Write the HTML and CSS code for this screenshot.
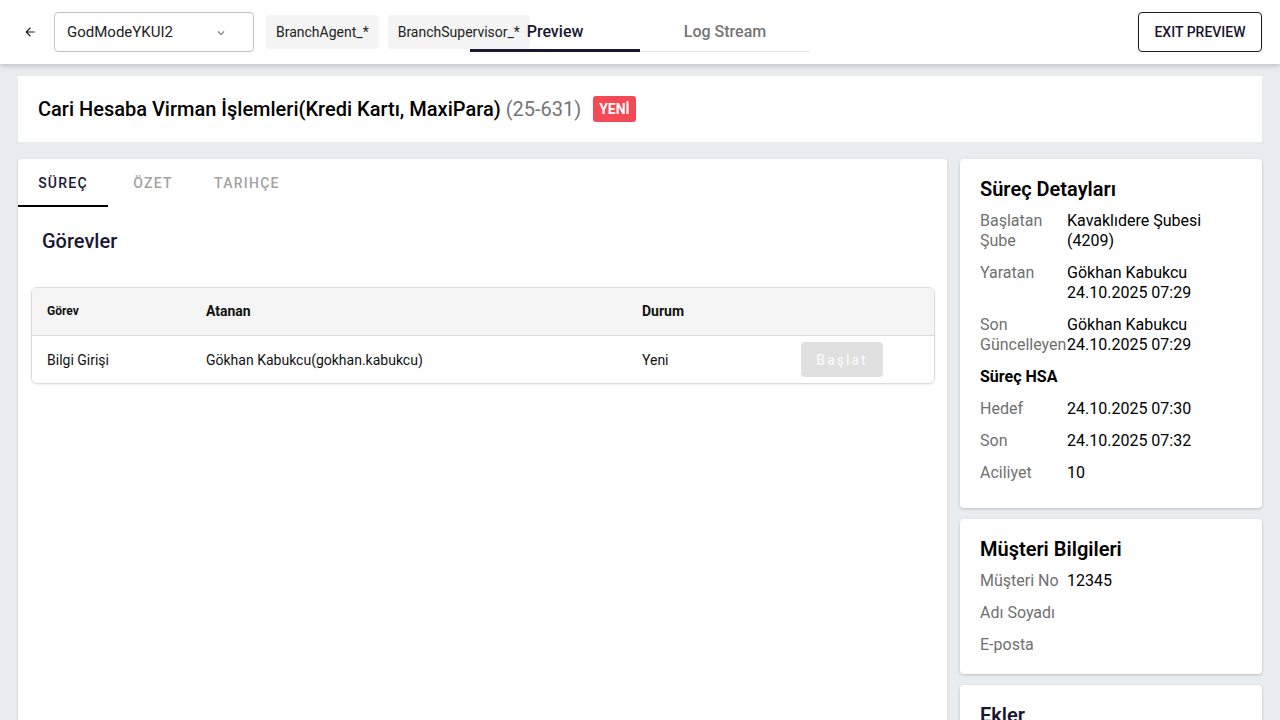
FILE: index.html
```html
<!DOCTYPE html>
<html lang="tr">
<head>
<meta charset="utf-8">
<title>Preview</title>
<link rel="stylesheet" href="styles.css">
</head>
<body>
<header class="topbar">
  <button class="back" aria-label="Geri">
    <svg width="14" height="14" viewBox="0 0 24 24"><path d="M20 11H7.83l5.59-5.59L12 4l-8 8 8 8 1.41-1.41L7.83 13H20v-2z" fill="#222"/></svg>
  </button>
  <div class="select">
    <span>GodModeYKUI2</span>
    <svg width="14" height="14" viewBox="0 0 24 24"><path d="M7.41 8.59 12 13.17l4.59-4.58L18 10l-6 6-6-6z" fill="#777"/></svg>
  </div>
  <span class="chip">BranchAgent_*</span>
  <span class="chip">BranchSupervisor_*</span>
  <nav class="toptabs">
    <span class="toptab active">Preview</span>
    <span class="toptab">Log Stream</span>
  </nav>
  <button class="exit">EXIT PREVIEW</button>
</header>

<main class="page">
  <section class="titlecard">
    <h1 class="title">Cari Hesaba Virman İşlemleri(Kredi Kartı, MaxiPara) <span class="code">(25-631)</span></h1>
    <span class="badge">YENİ</span>
  </section>

  <div class="columns">
    <section class="maincard">
      <div class="tabs">
        <span class="tab active">SÜREÇ</span>
        <span class="tab">ÖZET</span>
        <span class="tab">TARIHÇE</span>
      </div>
      <h2 class="section-title">Görevler</h2>
      <div class="table">
        <div class="trow thead">
          <span class="th small">Görev</span>
          <span class="th">Atanan</span>
          <span class="th">Durum</span>
          <span></span>
        </div>
        <div class="trow">
          <span>Bilgi Girişi</span>
          <span>Gökhan Kabukcu(gokhan.kabukcu)</span>
          <span>Yeni</span>
          <span><button class="start" disabled>Başlat</button></span>
        </div>
      </div>
    </section>

    <aside class="side">
      <section class="card card-first">
        <h3 class="card-title">Süreç Detayları</h3>
        <dl class="rows">
          <dt>Başlatan Şube</dt><dd>Kavaklıdere Şubesi (4209)</dd>
          <dt>Yaratan</dt><dd>Gökhan Kabukcu 24.10.2025 07:29</dd>
          <dt>Son Güncelleyen</dt><dd>Gökhan Kabukcu 24.10.2025 07:29</dd>
          <dt class="sub">Süreç HSA</dt><dd class="empty"></dd>
          <dt>Hedef</dt><dd>24.10.2025 07:30</dd>
          <dt>Son</dt><dd>24.10.2025 07:32</dd>
          <dt>Aciliyet</dt><dd>10</dd>
        </dl>
      </section>
      <section class="card card-tight">
        <h3 class="card-title">Müşteri Bilgileri</h3>
        <dl class="rows">
          <dt>Müşteri No</dt><dd>12345</dd>
          <dt>Adı Soyadı</dt><dd></dd>
          <dt>E-posta</dt><dd></dd>
        </dl>
      </section>
      <section class="card">
        <h3 class="card-title navy">Ekler</h3>
        <div class="spacer"></div>
      </section>
    </aside>
  </div>
</main>
</body>
</html>
```

FILE: styles.css
```css
* { box-sizing: border-box; }
html, body { margin: 0; padding: 0; }
body {
  font-family: Roboto, "Noto Sans", "Liberation Sans", sans-serif;
  background: #e9ecef;
  color: #000;
  width: 1280px;
  height: 720px;
  overflow: hidden;
}

/* top bar */
.topbar {
  position: relative;
  height: 64px;
  background: #fff;
  display: flex;
  align-items: center;
  padding: 0 18px 0 20px;
  box-shadow: 0 2px 5px rgba(0,0,0,0.18);
  z-index: 2;
}
.back {
  width: 20px; height: 24px;
  padding: 0;
  border: none; background: none;
  display: flex; align-items: center; justify-content: center;
  margin-right: 14px;
}
.select {
  width: 200px; height: 40px;
  border: 1px solid #c4c4c4;
  border-radius: 4px;
  display: flex; align-items: center; justify-content: space-between;
  padding: 0 25px 0 12px;
  font-size: 15px;
  color: #222;
}
.select svg { margin-top: 1px; }
.chip {
  height: 34px;
  display: flex; align-items: center;
  padding: 0 10px;
  background: #f4f4f4;
  border-radius: 4px;
  font-size: 14px;
  color: #222;
  margin-left: 12px;
}
.chip + .chip { margin-left: 9px; }
.toptabs {
  position: absolute;
  left: 470px; top: 0;
  width: 340px; height: 52px;
  display: flex;
  border-bottom: 1px solid #e0e0e0;
}
.toptab {
  flex: 1;
  display: flex; align-items: center; justify-content: center;
  padding-top: 12px;
  font-size: 16px;
  font-weight: 500;
  color: #757575;
}
.toptab.active {
  color: #1a1633;
  border-bottom: 3px solid #1a1633;
  margin-bottom: -1px;
  padding-top: 13px;
}
.exit {
  margin-left: auto;
  width: 124px; height: 40px;
  border: 1px solid #1a1633;
  border-radius: 4px;
  background: #fff;
  color: #1a1633;
  font-family: inherit;
  font-size: 14px;
  font-weight: 500;
}

/* page */
.page { padding: 12px 18px 0; }
.titlecard {
  height: 66px;
  background: #fff;
  display: flex; align-items: center;
  padding: 0 20px;
}
.title {
  margin: 0;
  font-size: 20px;
  font-weight: 500;
  color: #000;
}
.code { font-weight: 400; color: #757575; }
.badge {
  margin-left: 12px;
  height: 26px;
  padding: 0 6px;
  display: flex; align-items: center;
  background: #f44a55;
  color: #fff;
  border-radius: 3px;
  font-size: 14px;
  font-weight: 700;
}
.columns {
  display: flex;
  gap: 13px;
  margin-top: 17px;
  align-items: flex-start;
}
.maincard {
  width: 929px;
  min-height: 640px;
  background: #fff;
  border-radius: 4px;
  box-shadow: 0 1px 3px rgba(0,0,0,0.15);
}
.tabs { display: flex; height: 48px; }
.tab {
  min-width: 90px;
  padding: 0 16px;
  display: flex; align-items: center; justify-content: center;
  font-size: 14px;
  font-weight: 500;
  letter-spacing: 1.25px;
  color: #a3a3a3;
}
.tab.active {
  color: #1a1633;
  border-bottom: 2px solid #000;
  padding-top: 2px;
}
.section-title {
  margin: 20px 0 0 24px;
  font-size: 20px;
  line-height: 28px;
  font-weight: 500;
  color: #1a1633;
}
.table {
  margin: 32px 12px 0 13px;
  border: 1px solid #dcdcdc;
  border-radius: 6px;
  overflow: hidden;
  box-shadow: 0 1px 2px rgba(0,0,0,0.08);
}
.trow {
  display: grid;
  grid-template-columns: 159px 436px 159px 1fr;
  height: 47px;
  align-items: center;
  font-size: 14px;
  color: #111;
}
.trow > span { padding-left: 15px; }
.thead {
  background: #f5f5f5;
  border-bottom: 1px solid #dcdcdc;
  height: 48px;
  padding-bottom: 1px;
}
.th { font-weight: 700; font-size: 14px; }
.th.small { font-size: 12px; }
.start {
  width: 82px; height: 35px;
  border: none;
  border-radius: 4px;
  background: #e0e0e0;
  color: #f7f7f7;
  font-family: inherit;
  font-size: 14px;
  font-weight: 500;
  letter-spacing: 2px;
  margin-left: 0;
}

/* side */
.side {
  width: 302px;
  display: flex;
  flex-direction: column;
  gap: 11px;
}
.card {
  background: #fff;
  border-radius: 4px;
  box-shadow: 0 1px 3px rgba(0,0,0,0.2);
  padding: 16px 20px 26px;
}
.card-first { padding-bottom: 25px; }
.card-tight { padding-bottom: 19px; }
.card-title {
  margin: 0 0 8px;
  font-size: 20px;
  line-height: 28px;
  font-weight: 600;
  color: #000;
}
.card-title.navy { color: #1a1633; }
.rows {
  margin: 0;
  display: grid;
  grid-template-columns: 87px 1fr;
  row-gap: 12px;
  font-size: 16px;
  line-height: 20px;
}
.rows dt { color: #707070; }
.rows dd { margin: 0; color: #000; min-height: 20px; }
.rows dt.sub { color: #000; font-weight: 700; white-space: nowrap; }
.spacer { height: 60px; }
```
